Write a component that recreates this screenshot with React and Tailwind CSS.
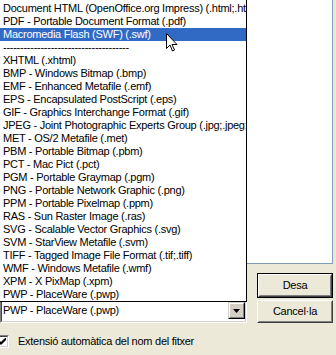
import React from "react";

const formats = [
  "Document HTML (OpenOffice.org Impress) (.html;.htm)",
  "PDF - Portable Document Format (.pdf)",
  "Macromedia Flash (SWF) (.swf)",
  "-------------------------------------",
  "XHTML (.xhtml)",
  "BMP - Windows Bitmap (.bmp)",
  "EMF - Enhanced Metafile (.emf)",
  "EPS - Encapsulated PostScript (.eps)",
  "GIF - Graphics Interchange Format (.gif)",
  "JPEG - Joint Photographic Experts Group (.jpg;.jpeg;.jfif;.jif;.jpe)",
  "MET - OS/2 Metafile (.met)",
  "PBM - Portable Bitmap (.pbm)",
  "PCT - Mac Pict (.pct)",
  "PGM - Portable Graymap (.pgm)",
  "PNG - Portable Network Graphic (.png)",
  "PPM - Portable Pixelmap (.ppm)",
  "RAS - Sun Raster Image (.ras)",
  "SVG - Scalable Vector Graphics (.svg)",
  "SVM - StarView Metafile (.svm)",
  "TIFF - Tagged Image File Format (.tif;.tiff)",
  "WMF - Windows Metafile (.wmf)",
  "XPM - X PixMap (.xpm)",
  "PWP - PlaceWare (.pwp)",
];

const selected = 2;

const DropArrow = () => (
  <svg width="7" height="4" viewBox="0 0 7 4">
    <path d="M0 0h7L3.5 4z" fill="#000" />
  </svg>
);

const Cursor = () => (
  <svg width="12" height="20" viewBox="0 0 12 20">
    <path
      d="M0.5 0.5v15l3.5-3.5 2.5 6 2-1-2.5-5.5h5z"
      fill="#fff"
      stroke="#000"
      strokeWidth="1"
      strokeLinejoin="miter"
    />
  </svg>
);

const ClassicButton = ({ children, isDefault, className }) => (
  <div
    className={`${className} ${
      isDefault ? "border border-black" : ""
    } bg-[#ece9d8]`}
  >
    <div className="h-full border border-t-white border-l-white border-r-[#404040] border-b-[#404040]">
      <div className="h-full flex items-center justify-center border border-t-[#ece9d8] border-l-[#ece9d8] border-r-[#808080] border-b-[#808080] text-black">
        {children}
      </div>
    </div>
  </div>
);

export default function App() {
  return (
    <div
      className="relative w-[336px] h-[355px] overflow-hidden bg-[#ece9d8] text-[11px] tracking-[-0.26px] text-black"
      style={{ fontFamily: '"Liberation Sans", Arial, sans-serif' }}
    >
      {/* file list panel behind the dropdown */}
      <div className="w-[333px] h-[264px] bg-white border-r border-b border-[#7f9db9]" />

      <div className="flex mt-[9px]">
        <div className="w-[247px] flex flex-col">
          {/* filename field, hidden behind the open list */}
          <div className="h-[21px] bg-white border border-[#7f9db9]" />
          <div className="mt-[6px] h-[23px] flex bg-white border border-t-[#808080] border-l-[#808080] border-r-white border-b-white">
            <div className="flex-1 flex border border-t-[#404040] border-l-[#404040] border-r-[#d4d0c8] border-b-[#d4d0c8]">
              <div className="flex-1 pl-[1px] leading-[17px] whitespace-nowrap">
                PWP - PlaceWare (.pwp)
              </div>
              <div className="w-[17px] h-[17px] bg-[#d4d0c8] border border-t-[#d4d0c8] border-l-[#d4d0c8] border-r-black border-b-black">
                <div className="h-full flex items-center justify-center border border-t-white border-l-white border-r-[#808080] border-b-[#808080]">
                  <DropArrow />
                </div>
              </div>
            </div>
          </div>
        </div>

        <div className="ml-[10px] w-[76px] flex flex-col gap-[2px]">
          <ClassicButton isDefault className="h-[25px]">
            Desa
          </ClassicButton>
          <ClassicButton className="h-[23px]">Cancel·la</ClassicButton>
        </div>
      </div>

      <div className="mt-[12px] flex items-center gap-[9px]">
        <div className="ml-[-4px] w-[13px] h-[13px] bg-white border border-t-[#808080] border-l-[#808080] border-r-white border-b-white">
          <div className="h-full flex items-center justify-center border border-t-[#404040] border-l-[#404040] border-r-[#d4d0c8] border-b-[#d4d0c8]">
            <svg width="7" height="7" viewBox="0 0 7 7">
              <path d="M0 2L2 4L7 -1V2L2 7L0 5Z" fill="#000" />
            </svg>
          </div>
        </div>
        <span className="leading-[13px]">Extensió automàtica del nom del fitxer</span>
      </div>

      {/* open dropdown list */}
      <div className="absolute left-0 top-0 w-[247px] h-[302px] bg-white border-r border-b border-black pt-[2px] overflow-hidden">
        {formats.map((f, i) => (
          <div
            key={i}
            className={`h-[13px] leading-[13px] pl-[3px] whitespace-nowrap ${
              i === selected ? "bg-[#316ac5] text-white" : "text-black"
            }`}
          >
            {f}
          </div>
        ))}
      </div>

      <div className="absolute left-[166px] top-[33px]">
        <Cursor />
      </div>
    </div>
  );
}
